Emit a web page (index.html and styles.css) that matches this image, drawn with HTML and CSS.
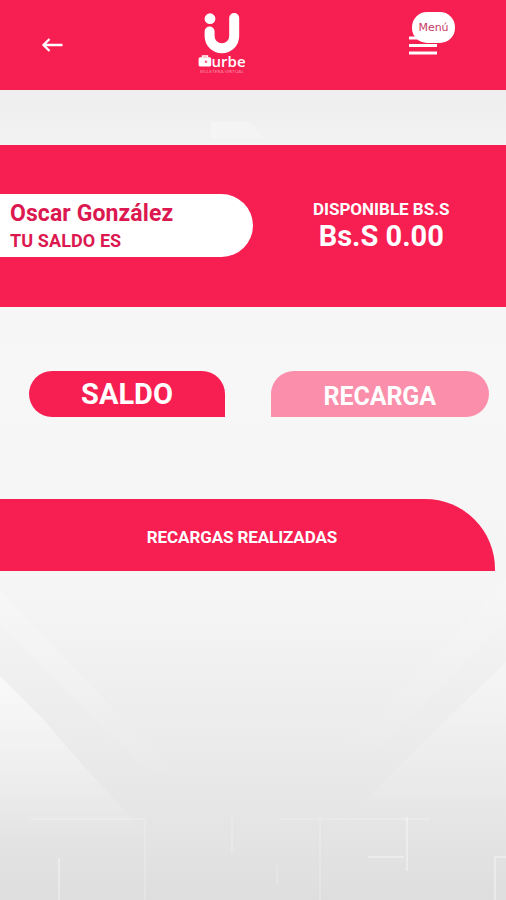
FILE: index.html
```html
<!DOCTYPE html>
<html lang="es">
<head>
<meta charset="utf-8">
<title>Urbe - Saldo</title>
<link rel="stylesheet" href="styles.css">
</head>
<body>
<svg class="backdrop" viewBox="0 0 506 900" aria-hidden="true">
  <defs>
    <linearGradient id="base" x1="0" y1="0" x2="0" y2="1">
      <stop offset="0.1" stop-color="#eeeeee"/>
      <stop offset="0.18" stop-color="#f4f4f4"/>
      <stop offset="0.42" stop-color="#f7f7f7"/>
      <stop offset="0.66" stop-color="#f5f5f5"/>
      <stop offset="0.78" stop-color="#eeeeee"/>
      <stop offset="0.9" stop-color="#e6e6e6"/>
      <stop offset="1" stop-color="#dedede"/>
    </linearGradient>
    <linearGradient id="ray" x1="0" y1="0" x2="0" y2="1">
      <stop offset="0" stop-color="#fff" stop-opacity="0.6"/>
      <stop offset="1" stop-color="#fff" stop-opacity="0"/>
    </linearGradient>
  </defs>
  <rect width="506" height="900" fill="url(#base)"/>
  <path d="M0 676L42 718L80 762L150 838H0Z" fill="url(#ray)"/>
  <path d="M506 662L420 745L330 835H506Z" fill="url(#ray)" opacity=".5"/>
  <path d="M0 590L190 790H165L0 625Z" fill="url(#ray)" opacity=".4"/>
  <path d="M506 580L310 785H345L506 620Z" fill="url(#ray)" opacity=".25"/>
  <path d="M211 122H250L264 138H211Z" fill="#fff" fill-opacity=".25"/>
  <g stroke="#fff" stroke-opacity=".35" stroke-width="2" fill="none">
    <path d="M59 858V900M407 817V871M368 857H404M495 900V857H506"/>
    <path d="M30 819H145V900M232 817V853M320 817V900M277 865V885M280 819H430" stroke-opacity=".18"/>
  </g>
</svg>

<header class="topbar">
  <a class="back" aria-label="Volver">
    <svg width="22" height="16" viewBox="0 0 22 16"><path d="M21.5 8H3M8.5 2L2.5 8L8.5 14" fill="none" stroke="#fff" stroke-width="2.3"/></svg>
  </a>
  <svg class="logo" width="56" height="66" viewBox="0 0 56 66">
    <circle cx="16" cy="7.7" r="5.4" fill="#fff"/>
    <path d="M16 20.5V25A12.3 12.3 0 0 0 40.6 25V7" fill="none" stroke="#fff" stroke-width="10" stroke-linecap="round" transform="translate(-.4)"/>
    <path d="M8.5 46.5V45H13.5V46.5" fill="none" stroke="#fff" stroke-width="1.4"/>
    <rect x="4.6" y="46.3" width="12.6" height="9.2" rx="1.6" fill="#fff"/>
    <circle cx="12" cy="50.8" r="1.3" fill="#f75c82"/>
    <text class="logo-name" x="17.6" y="55.5" textLength="34" lengthAdjust="spacingAndGlyphs">urbe</text>
    <text class="logo-tag" x="6" y="61.8" textLength="44" lengthAdjust="spacingAndGlyphs">BILLETERA VIRTUAL</text>
  </svg>
  <div class="menu">
    <svg width="28" height="19" viewBox="0 0 28 19"><path d="M0 2H28M0 9.5H28M0 17H28" stroke="#fff" stroke-width="3"/></svg>
    <span class="menu-label">Menú</span>
  </div>
</header>

<section class="balance">
  <div class="owner">
    <div class="owner-name">Oscar González</div>
    <div class="owner-caption">TU SALDO ES</div>
  </div>
  <div class="available">
    <div class="available-label">DISPONIBLE BS.S</div>
    <div class="available-amount">Bs.S 0.00</div>
  </div>
</section>

<nav class="tabs">
  <a class="tab tab-saldo">SALDO</a>
  <a class="tab tab-recarga">RECARGA</a>
</nav>

<section class="history"><span>RECARGAS REALIZADAS</span></section>
</body>
</html>
```
FILE: styles.css
```css
* { box-sizing: border-box; }
body {
  margin: 0;
  height: 900px;
  overflow: hidden;
  background: #f5f5f5;
  font-family: Roboto, "Liberation Sans", sans-serif;
  font-weight: 700;
  color: #fff;
}
.backdrop {
  position: absolute;
  inset: 0;
  width: 506px;
  height: 900px;
  z-index: -1;
}
.topbar {
  display: grid;
  grid-template-columns: 194px 1fr 97px;
  height: 90px;
  background: #f71e52;
}
.back { padding: 37px 0 0 40.5px; line-height: 0; }
.logo { margin-top: 11px; }
.logo-name { font: 600 14.5px "Open Sans", sans-serif; fill: #fff; }
.logo-tag { font: 400 4px Lato, sans-serif; fill: #fb8ba6; }
.menu { position: relative; padding-top: 36px; line-height: 0; }
.menu-label {
  position: absolute;
  left: 3px;
  top: 12px;
  width: 43px;
  height: 31px;
  border-radius: 15px;
  background: #fff;
  color: #c83a66;
  font: 400 11px/31px "DejaVu Sans", sans-serif;
  text-align: center;
}
.balance {
  display: flex;
  height: 162px;
  margin-top: 54.5px;
  padding-top: 49.5px;
  background: #f71e52;
}
.owner {
  width: 254px;
  height: 63px;
  padding: 5px 0 0 10px;
  border-radius: 0 32px 32px 0;
  background: #fff;
  color: #dc1850;
}
.owner-name { font-size: 23px; line-height: 29px; letter-spacing: .1px; }
.owner-caption { font-size: 18px; line-height: 26px; letter-spacing: .1px; }
.available { width: 255px; padding: 4px 0 0 4px; text-align: center; }
.available-label { font-size: 17px; line-height: 22px; }
.available-amount { font-size: 29px; line-height: 32px; }
.tabs {
  display: flex;
  justify-content: space-between;
  margin: 64.5px 17px 0 29px;
}
.tab { height: 46px; line-height: 47px; text-align: center; }
.tab-saldo {
  width: 196px;
  border-radius: 23px 23px 0 23px;
  background: #f71e52;
  font-size: 29px;
}
.tab-recarga {
  width: 218.5px;
  border-radius: 23px 23px 23px 0;
  background: #fb8eaa;
  font-size: 25px;
  line-height: 51px;
  letter-spacing: -.1px;
}
.history {
  width: 495px;
  height: 72px;
  margin-top: 82px;
  padding-right: 11px;
  border-radius: 0 70px 0 0;
  background: #f71e52;
  font-size: 17px;
  letter-spacing: -.1px;
  line-height: 77px;
  text-align: center;
}
```
